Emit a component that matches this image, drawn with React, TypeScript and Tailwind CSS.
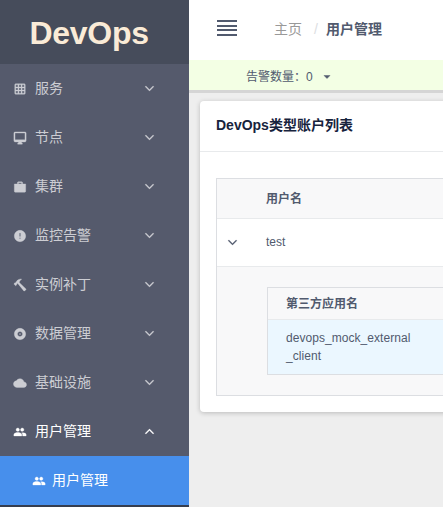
import React from 'react';
import {
  IoIosArrowDown,
  IoIosArrowUp,
  IoMdAlert,
  IoMdArrowDropdown,
  IoMdBriefcase,
  IoMdCloud,
  IoMdDesktop,
  IoMdDisc,
  IoMdGrid,
  IoMdHammer,
  IoMdPeople,
} from 'react-icons/io';

const menu = [
  { label: '服务', Icon: IoMdGrid },
  { label: '节点', Icon: IoMdDesktop },
  { label: '集群', Icon: IoMdBriefcase },
  { label: '监控告警', Icon: IoMdAlert },
  { label: '实例补丁', Icon: IoMdHammer },
  { label: '数据管理', Icon: IoMdDisc },
  { label: '基础设施', Icon: IoMdCloud },
  { label: '用户管理', Icon: IoMdPeople, open: true },
];

function Sidebar() {
  return (
    <aside className="flex w-[189px] shrink-0 flex-col bg-[#363e4f]">
      <div className="flex h-16 shrink-0 items-center bg-[#464c5b] pl-[29.5px] pt-0.5">
        <span className="text-[32px] font-bold leading-none tracking-[-0.3px] text-[#faebd7]">DevOps</span>
      </div>
      <nav className="bg-[#555a6c] text-sm">
        {menu.map(({ label, Icon, open }) => (
          <div
            key={label}
            className={`flex h-[49px] items-center pl-[13px] pr-[33px] ${open ? 'text-white' : 'text-[#cccdd3]'}`}
          >
            <Icon className="size-3.5" strokeWidth="12" />
            <span className="ml-2 flex-1 pb-0.5">{label}</span>
            {open ? (
              <IoIosArrowUp className="size-[13px]" strokeWidth="8" />
            ) : (
              <IoIosArrowDown className="mb-px size-[13px]" strokeWidth="8" />
            )}
          </div>
        ))}
        <div className="flex h-[49px] items-center bg-[#478fec] pl-8 text-white">
          <IoMdPeople className="size-3.5" strokeWidth="12" />
          <span className="ml-1.5 pb-0.5">用户管理</span>
        </div>
      </nav>
    </aside>
  );
}

function Header() {
  return (
    <header className="flex h-[60px] shrink-0 items-center bg-white pl-7 text-sm">
      <div className="flex h-5 w-5 flex-col justify-between pb-1">
        <i className="h-0.5 bg-[#515a6e]" />
        <i className="h-0.5 bg-[#515a6e]" />
        <i className="h-0.5 bg-[#515a6e]" />
        <i className="h-0.5 bg-[#515a6e]" />
      </div>
      <span className="ml-[37px] pb-0.5 text-[#999]">主页</span>
      <span className="ml-3 w-3 pb-0.5 text-[#dcdee2]">/</span>
      <span className="pb-0.5 font-bold text-[#515a6e]">用户管理</span>
    </header>
  );
}

function AccountTable() {
  return (
    <div className="ml-4 mt-[26px] h-[218px] border border-r-0 border-[#dcdee2] bg-[#f8f8f9] text-xs text-[#515a6e]">
      <div className="flex h-10 items-center border-b border-[#e8eaec] pl-[49px] font-bold">用户名</div>
      <div className="flex h-12 items-center border-b border-[#e8eaec] bg-white">
        <IoIosArrowDown className="mb-px ml-[9px] size-[13px]" strokeWidth="8" />
        <span className="ml-[27px] pb-0.5">test</span>
      </div>
      <div className="pl-[50px] pt-5">
        <div className="h-[88px] border border-r-0 border-[#dcdee2]">
          <div className="flex h-8 items-center border-b border-[#e8eaec] pl-[18px] font-bold">第三方应用名</div>
          <div className="flex h-[54px] items-center bg-[#ebf7ff] pl-[18px]">
            <p className="w-[128px] break-all leading-[18px] tracking-[0.05px]">devops_mock_external_client</p>
          </div>
        </div>
      </div>
    </div>
  );
}

export default function App() {
  return (
    <div className="flex h-[507px] w-[443px] overflow-hidden bg-[#eee] font-['Liberation_Sans','Noto_Sans_CJK_SC',sans-serif]">
      <Sidebar />
      <main className="flex min-w-0 flex-1 flex-col overflow-hidden">
        <Header />
        <div className="flex h-[33px] shrink-0 items-center border-b-[3px] border-[#d5d5d5] bg-[#f3ffe4] pl-[57px] pt-[3px] text-xs text-[#515a6e]">
          <span>告警数量：0</span>
          <IoMdArrowDropdown className="ml-2 size-3" strokeWidth="20" />
        </div>
        <section className="-mr-2.5 ml-[11px] mt-2 h-[311px] rounded bg-white shadow-[0_1px_5px_rgba(0,0,0,0.22)]">
          <h1 className="flex h-[51px] items-center border-b border-[#e8eaec] pb-0.5 pl-4 text-sm font-bold text-[#17233d]">
            DevOps类型账户列表
          </h1>
          <AccountTable />
        </section>
      </main>
    </div>
  );
}
